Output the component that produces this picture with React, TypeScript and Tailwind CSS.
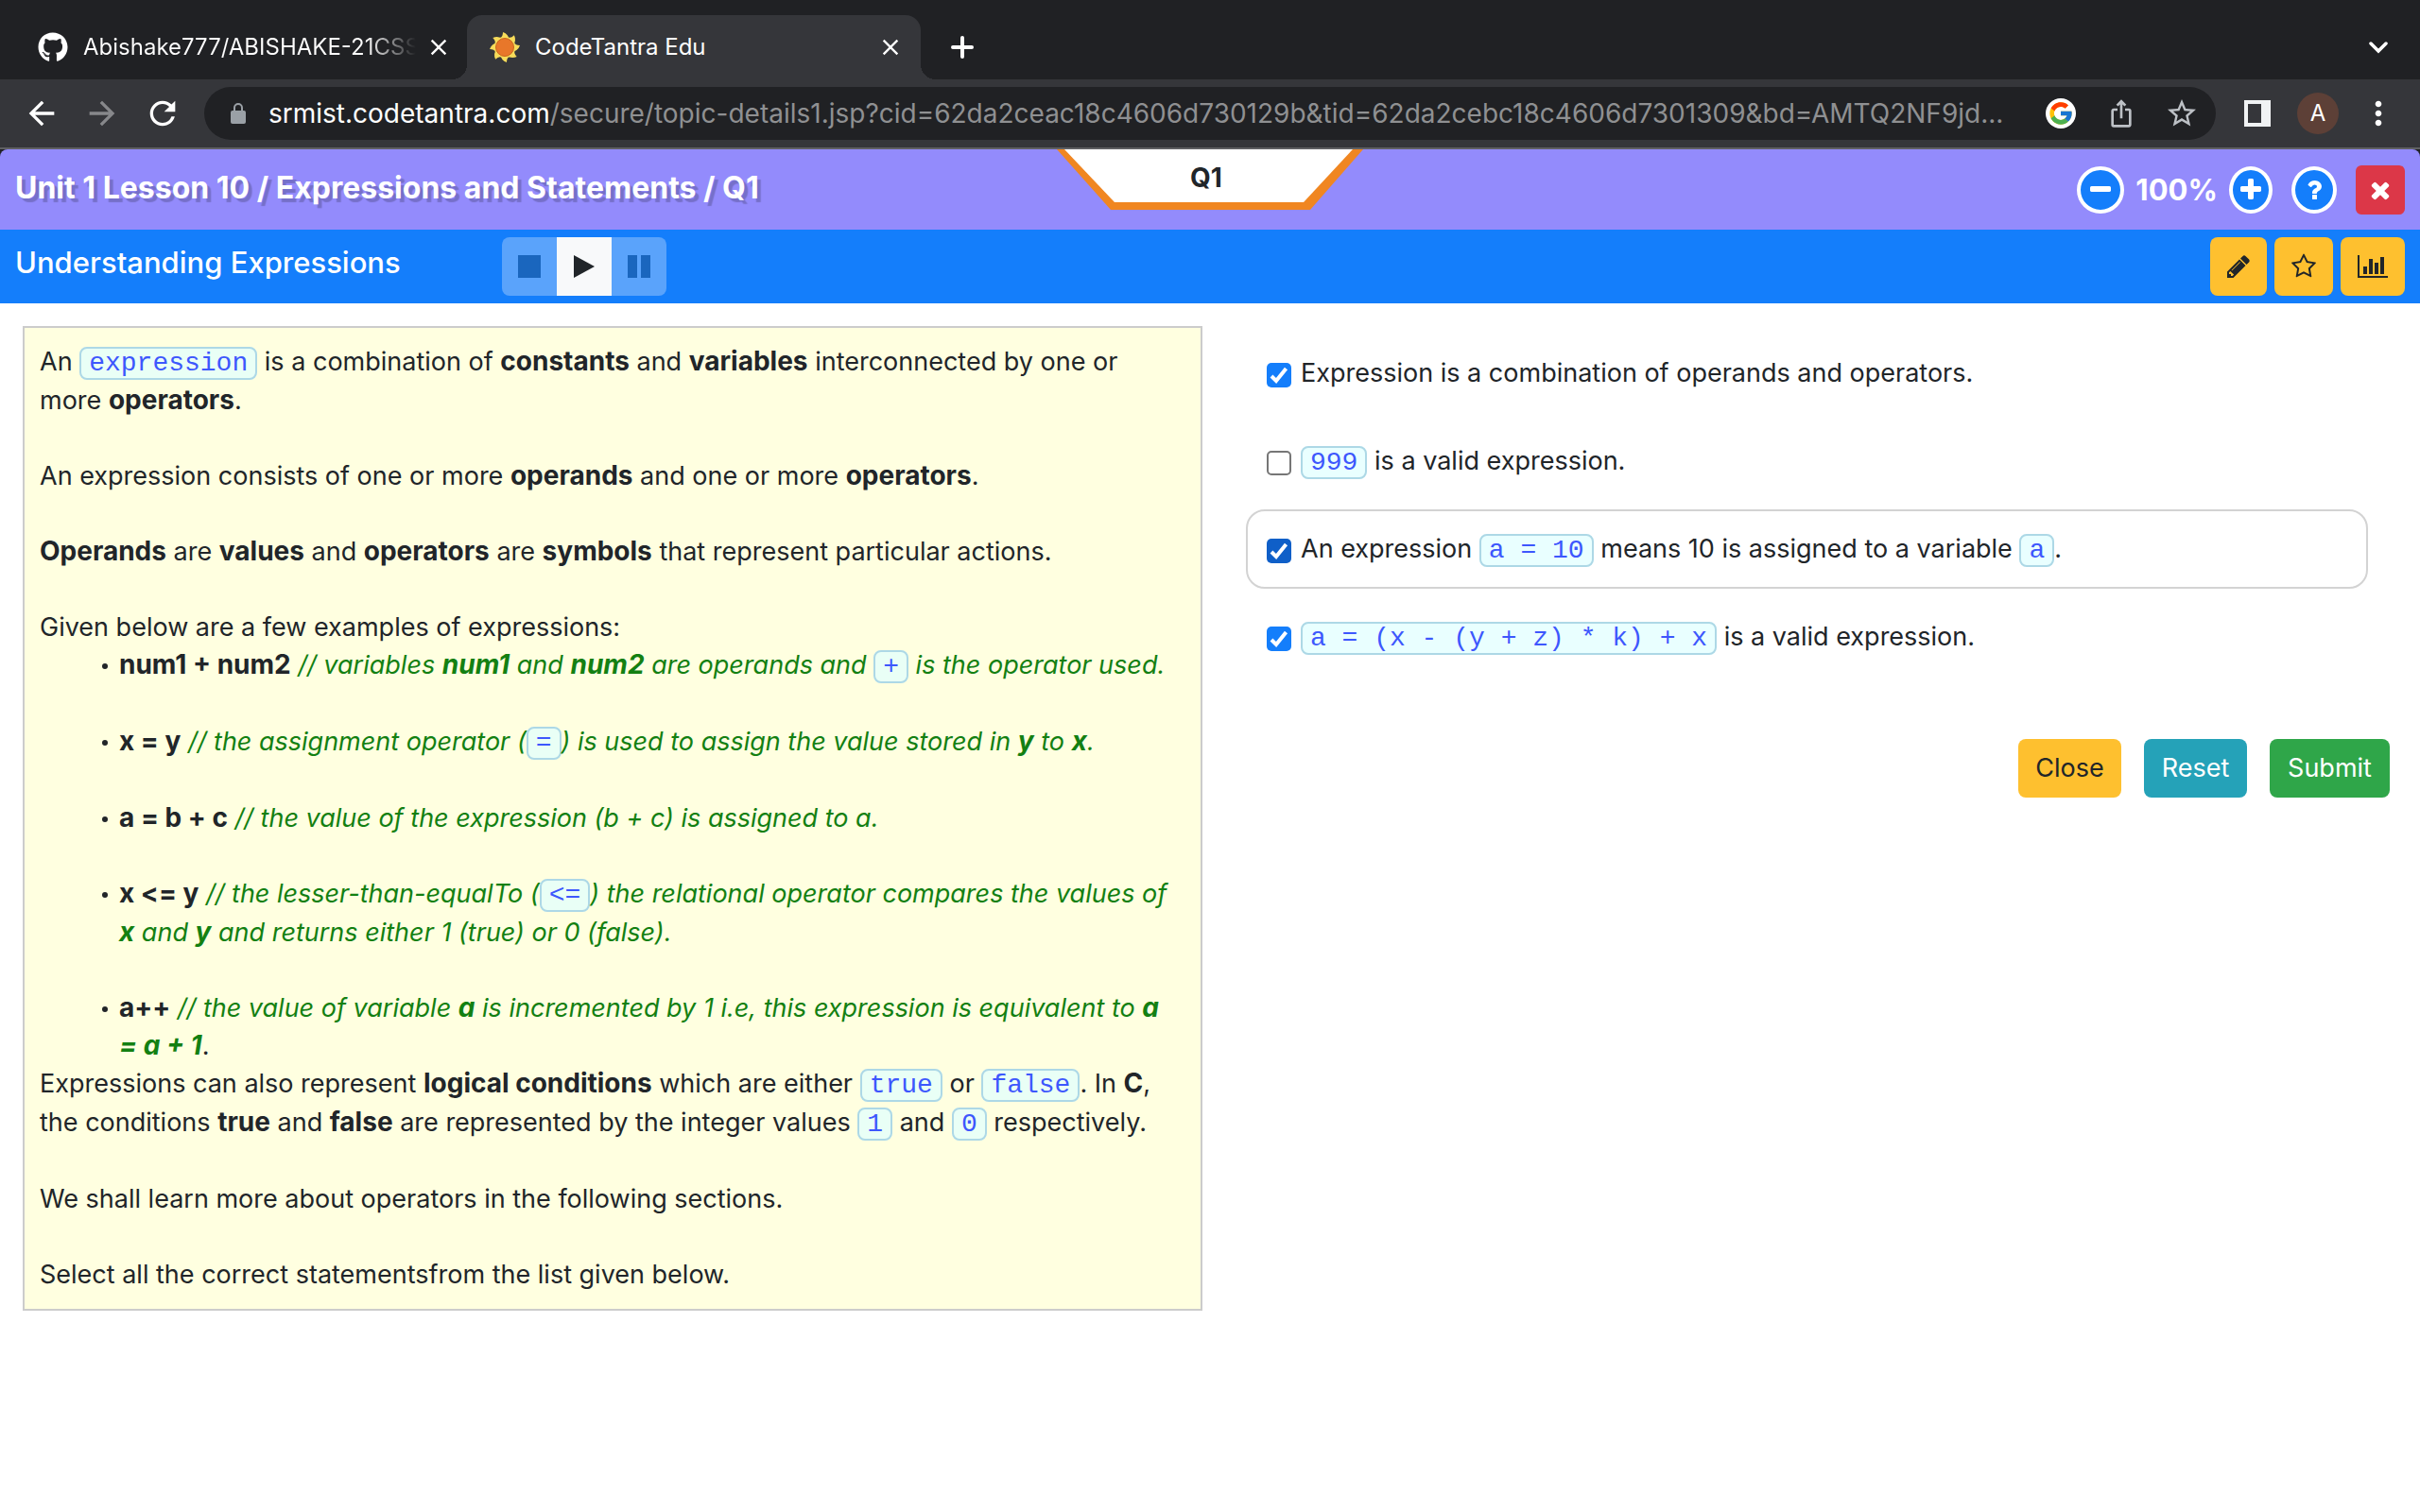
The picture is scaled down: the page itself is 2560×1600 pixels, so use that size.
import React, { useState } from "react";
import { FaGithub } from "react-icons/fa";
import { FcGoogle } from "react-icons/fc";
import { MdArrowBack, MdArrowForward, MdRefresh, MdClose, MdStarBorder, MdIosShare, MdMoreVert } from "react-icons/md";

const PATHS = {
  pencil:
    "M491 1536l91-91-235-235-91 91v107h128v128h107zm523-928q0-22-22-22-10 0-17 7l-542 542q-7 7-7 17 0 22 22 22 10 0 17-7l542-542q7-7 7-17zm-54-192l416 416-832 832h-416v-416zm683 96q0 53-37 90l-166 166-416-416 166-165q36-38 90-38 53 0 91 38l235 234q37 39 37 91z",
  star:
    "M1201 1004l306-297-422-62-189-382-189 382-422 62 306 297-73 421 378-199 377 199zm527-357q0 22-26 48l-363 354 86 500q1 7 1 20 0 50-41 50-19 0-40-12l-449-236-449 236q-22 12-40 12-21 0-31.5-14.5t-10.5-35.5q0-6 2-20l86-500-364-354q-25-27-25-48 0-37 56-46l502-73 225-455q19-41 49-41t49 41l225 455 502 73q56 9 56 46z",
  chart:
    "M640 896v512h-256v-512h256zm384-512v1024h-256v-1024h256zm1024 1152v128h-2048v-1536h128v1408h1920zm-640-896v768h-256v-768h256zm384-384v1152h-256v-1152h256z",
  times:
    "M1490 1322q0 40-28 68l-136 136q-28 28-68 28t-68-28l-294-294-294 294q-28 28-68 28t-68-28l-136-136q-28-28-28-68t28-68l294-294-294-294q-28-28-28-68t28-68l136-136q28-28 68-28t68 28l294 294 294-294q28-28 68-28t68 28l136 136q28 28 28 68t-28 68l-294 294 294 294q28 28 28 68z",
  minus:
    "M1600 736v192q0 40-28 68t-68 28h-1216q-40 0-68-28t-28-68v-192q0-40 28-68t68-28h1216q40 0 68 28t28 68z",
  plus:
    "M1600 736v192q0 40-28 68t-68 28h-416v416q0 40-28 68t-68 28h-192q-40 0-68-28t-28-68v-416h-416q-40 0-68-28t-28-68v-192q0-40 28-68t68-28h416v-416q0-40 28-68t68-28h192q40 0 68 28t28 68v416h416q40 0 68 28t28 68z",
  question:
    "M1088 1256v240q0 16-12 28t-28 12h-240q-16 0-28-12t-12-28v-240q0-16 12-28t28-12h240q16 0 28 12t12 28zm316-600q0 54-15.5 101t-35 76.5-55 59.5-57.5 43.5-61 35.5q-41 23-68.5 65t-27.5 67q0 17-12 32.5t-28 15.5h-240q-15 0-25.5-18.5t-10.5-37.5v-45q0-83 65-156.5t143-108.5q59-27 84-56t25-76q0-42-46.5-74t-107.5-32q-65 0-108 29-35 25-107 115-13 16-31 16-12 0-25-8l-164-125q-13-10-15.5-25t5.5-28q160-266 464-266 80 0 161 31t146 83 106 127.5 41 158.5z",
};

function Glyph({ d, className, wide = false }: { d: string; className: string; wide?: boolean }) {
  return (
    <svg viewBox={wide ? "0 0 2048 1792" : "0 0 1792 1792"} className={className} fill="currentColor" aria-hidden="true">
      <path d={d} />
    </svg>
  );
}

function SunIcon() {
  const rays = [0, 45, 90, 135, 180, 225, 270, 315];
  return (
    <svg viewBox="-16 -16 32 32" className="size-8 shrink-0" aria-hidden="true">
      {rays.map((r) => (
        <path key={r} d="M-6 -6 L-5 -10 Q-2 -11 -2 -16 Q4 -14 5 -7 Z" fill="#f7dc5a" transform={`rotate(${r})`} />
      ))}
      <circle r="9.500" fill="#e8772a" stroke="#c9651c" />
    </svg>
  );
}

function BrowserChrome() {
  return (
    <header className="bg-[#202124] text-white">
      <div className="flex h-[84px] items-end">
        <div className="flex h-[68px] w-[480px] shrink-0 items-center pl-10">
          <FaGithub className="size-8 shrink-0" aria-hidden="true" />
          <span className="ml-4 w-[352px] overflow-hidden whitespace-nowrap bg-gradient-to-r from-white from-85% to-transparent bg-clip-text text-2xl text-transparent">
            Abishake777/ABISHAKE-21CSS201
          </span>
          <button aria-label="Close tab" className="ml-2.5 shrink-0">
            <MdClose className="size-7" />
          </button>
        </div>
        <div className="relative ml-3.5 flex h-[68px] w-[480px] shrink-0 items-center rounded-t-2xl bg-[#35363a] pl-6 pr-[18px]">
          <SunIcon />
          <span className="ml-4 flex-1 text-2xl">CodeTantra Edu</span>
          <button aria-label="Close tab">
            <MdClose className="size-7" />
          </button>
          <span className="absolute bottom-0 right-full size-4 bg-[radial-gradient(circle_at_0_0,transparent_16px,#35363a_16px)]" />
          <span className="absolute bottom-0 left-full size-4 bg-[radial-gradient(circle_at_100%_0,transparent_16px,#35363a_16px)]" />
        </div>
        <button aria-label="New tab" className="ml-8 flex h-[68px] items-center">
          <svg viewBox="0 0 24 24" className="size-6" stroke="currentColor" strokeWidth="4" strokeLinecap="round" aria-hidden="true">
            <path d="M12 2v20M2 12h20" />
          </svg>
        </button>
        <button aria-label="Search tabs" className="ml-auto mr-[34px] flex h-[68px] items-center">
          <svg viewBox="0 0 20 14" className="w-5" fill="none" stroke="currentColor" strokeWidth="3.500" strokeLinecap="round" aria-hidden="true">
            <path d="M2 3l8 8 8-8" />
          </svg>
        </button>
      </div>
      <div className="flex h-[74px] items-center border-b-2 border-[#5f6063] bg-[#35363a]">
        <button aria-label="Back" className="ml-6">
          <MdArrowBack className="size-10" />
        </button>
        <button aria-label="Forward" className="ml-6 text-[#87888b]">
          <MdArrowForward className="size-10" />
        </button>
        <button aria-label="Reload" className="ml-6">
          <MdRefresh className="size-10" />
        </button>
        <div className="ml-6 flex h-14 min-w-0 flex-1 items-center rounded-full bg-[#202124] pl-7 pr-[18px] text-[#bdc1c6]">
          <svg viewBox="0 0 16 22" className="w-4 shrink-0" aria-hidden="true">
            <rect y="8" width="16" height="14" rx="2" fill="#9aa0a6" />
            <path d="M4 9V5a4 4 0 0 1 8 0v4" fill="none" stroke="#9aa0a6" strokeWidth="2" />
          </svg>
          <p className="ml-6 flex-1 truncate text-[28px] leading-10 text-[#8f9092]">
            <span className="text-white">srmist.codetantra.com</span>
            /secure/topic-details1.jsp?cid=62da2ceac18c4606d730129b&amp;tid=62da2cebc18c4606d7301309&amp;bd=AMTQ2NF9jd...
          </p>
          <span className="ml-4 flex size-8 shrink-0 items-center justify-center rounded-full bg-white">
            <FcGoogle className="size-7" aria-hidden="true" />
          </span>
          <button aria-label="Share" className="ml-8">
            <MdIosShare className="size-8" />
          </button>
          <button aria-label="Bookmark" className="ml-[30px]">
            <MdStarBorder className="size-9" />
          </button>
        </div>
        <button aria-label="Side panel" className="ml-[30px]">
          <svg viewBox="0 0 28 28" className="size-7" aria-hidden="true">
            <path fillRule="evenodd" fill="#f1f3f4" d="M0 0h28v28H0zM4 4v20h14V4z" />
          </svg>
        </button>
        <button aria-label="Profile" className="ml-7 flex size-11 items-center justify-center rounded-full bg-[#5d4037] text-2xl">
          A
        </button>
        <button aria-label="Menu" className="ml-[22px] mr-6">
          <MdMoreVert className="size-10" />
        </button>
      </div>
    </header>
  );
}

const ROUND = "flex h-[50px] items-center justify-center rounded-[50%] border-4 border-white bg-[#147efb] text-white";
const YELLOW = "flex h-[62px] items-center justify-center rounded-lg bg-[#fec02f] text-[#212529]";

function LessonBar() {
  return (
    <div className="bg-[#202124]">
      <div className="relative flex h-[85px] items-center rounded-t-lg bg-[#938bfc] px-4 text-white">
        <h1 className="pb-1 text-[32px] leading-10 font-bold [text-shadow:4px_4px_1px_rgba(0,0,0,0.2)]">
          Unit 1 Lesson 10 / Expressions and Statements / Q1
        </h1>
        <div className="absolute left-1/2 top-0 flex h-16 w-[324px] -translate-x-1/2 justify-center">
          <svg viewBox="0 0 324 64" className="absolute inset-0 size-full" aria-hidden="true">
            <path d="M0 0H324L268 64H57Z" fill="#f08621" />
            <path d="M8 0H313L261 56H61Z" fill="#fff" />
          </svg>
          <span className="relative mt-2.5 pr-2 text-[28px] leading-10 font-bold text-[#212529]">Q1</span>
        </div>
        <div className="ml-auto flex items-center">
          <button aria-label="Zoom out" className={ROUND + " w-[50px]"}>
            <Glyph d={PATHS.minus} className="size-7" />
          </button>
          <span className="mx-3 text-[31px] leading-10 font-bold">100%</span>
          <button aria-label="Zoom in" className={ROUND + " w-[46px]"}>
            <Glyph d={PATHS.plus} className="size-7" />
          </button>
          <button aria-label="Help" className={ROUND + " ml-5 w-12"}>
            <Glyph d={PATHS.question} className="size-7" />
          </button>
          <button aria-label="Exit" className="ml-5 flex size-[52px] items-center justify-center rounded-md bg-[#dc3748]">
            <Glyph d={PATHS.times} className="size-7" />
          </button>
        </div>
      </div>
    </div>
  );
}

function TopicBar() {
  return (
    <div className="flex h-[78px] items-center bg-[#147efb] px-4 text-white">
      <h2 className="w-[515px] pb-2 text-[31px] leading-10 font-medium">Understanding Expressions</h2>
      <div className="flex h-[62px] overflow-hidden rounded-lg">
        <button aria-label="Stop" className="flex w-[58px] items-center justify-center bg-[#5aa3fb]">
          <span className="size-6 bg-[#1a66be]" />
        </button>
        <button aria-label="Play" className="flex w-[58px] items-center justify-center bg-[#f8f9fa]">
          <svg viewBox="0 0 22 24" className="h-6" aria-hidden="true">
            <path d="M0 0L22 12L0 24Z" fill="#212529" />
          </svg>
        </button>
        <button aria-label="Pause" className="flex w-[58px] items-center justify-center gap-1 bg-[#5aa3fb]">
          <span className="h-6 w-2.5 bg-[#1a66be]" />
          <span className="h-6 w-2.5 bg-[#1a66be]" />
        </button>
      </div>
      <div className="ml-auto flex gap-2">
        <button aria-label="Edit" className={YELLOW + " w-[60px]"}>
          <Glyph d={PATHS.pencil} className="size-7" />
        </button>
        <button aria-label="Favourite" className={YELLOW + " w-[62px]"}>
          <Glyph d={PATHS.star} className="size-7" />
        </button>
        <button aria-label="Statistics" className={YELLOW + " w-[68px]"}>
          <Glyph d={PATHS.chart} className="h-7 w-8" wide />
        </button>
      </div>
    </div>
  );
}

function Code({ children }: { children: React.ReactNode }) {
  return (
    <code className="rounded-lg border-2 border-[#add8e6] bg-[#e0ffff]/70 px-2 font-['Liberation_Mono',monospace] text-[28px] leading-[38px] text-[#3d57fd]">
      {children}
    </code>
  );
}

function B({ children }: { children: React.ReactNode }) {
  return <b className="text-[28px] leading-9">{children}</b>;
}

function Example({ code, children, last = false }: { code: string; children: React.ReactNode; last?: boolean }) {
  return (
    <li className={last ? "relative" : "relative mb-10"}>
      <span className="absolute -left-[18px] top-[18px] size-[6px] rounded-full bg-[#212529]" />
      <B>{code}</B> {children}
    </li>
  );
}

function Note({ children }: { children: React.ReactNode }) {
  return <i className="text-[#138012]">{children}</i>;
}

function Lesson() {
  return (
    <article className="w-1/2 max-w-[1248px] shrink-0 self-start border-2 border-[#ccc] bg-[#ffffe0] p-4 pr-6">
      <p className="mb-10">
        An <Code>expression</Code> is a combination of <B>constants</B> and <B>variables</B> interconnected by one or more{" "}
        <B>operators</B>.
      </p>
      <p className="mb-10">
        An expression consists of one or more <B>operands</B> and one or more <B>operators</B>.
      </p>
      <p className="mb-10">
        <B>Operands</B> are <B>values</B> and <B>operators</B> are <B>symbols</B> that represent particular actions.
      </p>
      <p>Given below are a few examples of expressions:</p>
      <ul className="pl-[84px]">
        <Example code="num1 + num2">
          <Note>
            // variables <B>num1</B> and <B>num2</B> are operands and <Code>+</Code> is the operator used.
          </Note>
        </Example>
        <Example code="x = y">
          <Note>
            // the assignment operator (<Code>=</Code>) is used to assign the value stored in <B>y</B> to <B>x</B>.
          </Note>
        </Example>
        <Example code="a = b + c">
          <Note>// the value of the expression (b + c) is assigned to a.</Note>
        </Example>
        <Example code="x <= y">
          <Note>
            // the lesser-than-equalTo (<Code>&lt;=</Code>) the relational operator compares the values of <B>x</B> and{" "}
            <B>y</B> and returns either 1 (true) or 0 (false).
          </Note>
        </Example>
        <Example code="a++" last>
          <Note>
            // the value of variable <B>a</B> is incremented by 1 i.e, this expression is equivalent to <B>a = a + 1</B>
          </Note>
          .
        </Example>
      </ul>
      <p className="mb-10">
        Expressions can also represent <B>logical conditions</B> which are either <Code>true</Code> or <Code>false</Code>. In{" "}
        <B>C</B>, the conditions <B>true</B> and <B>false</B> are represented by the integer values <Code>1</Code> and{" "}
        <Code>0</Code> respectively.
      </p>
      <p className="mb-10">We shall learn more about operators in the following sections.</p>
      <p>Select all the correct statementsfrom the list given below.</p>
    </article>
  );
}

function Option({ children, checked, hovered = false }: { children: React.ReactNode; checked: boolean; hovered?: boolean }) {
  const [on, setOn] = useState(checked);
  return (
    <label
      className={
        "flex min-h-[84px] items-center rounded-[20px] border-2 px-5 " + (hovered ? "border-[#d3d3d3]" : "border-transparent")
      }
    >
      <span className="relative mt-1 size-[26px] shrink-0">
        <input
          type="checkbox"
          checked={on}
          onChange={() => setOn(!on)}
          className={
            "block size-full appearance-none rounded-[5px] border-2 border-[#767676] bg-white checked:border-0 " +
            (hovered ? "checked:bg-[#0f5fc8]" : "checked:bg-[#147efb]")
          }
        />
        {on && (
          <svg viewBox="0 0 26 26" className="pointer-events-none absolute inset-0" fill="none" stroke="#fff" strokeWidth="4" aria-hidden="true">
            <path d="M5 14l5 5L20.500 6" />
          </svg>
        )}
      </span>
      <span className="ml-2.5">{children}</span>
    </label>
  );
}

function Answers() {
  return (
    <section className="flex flex-1 flex-col pl-[46px] pr-8 pt-2">
      <div className="mr-[23px] flex flex-col gap-[9px]">
        <Option checked>Expression is a combination of operands and operators.</Option>
        <Option checked={false}>
          <Code>999</Code> is a valid expression.
        </Option>
        <Option checked hovered>
          An expression <Code>a = 10</Code> means 10 is assigned to a variable <Code>a</Code>.
        </Option>
        <Option checked>
          <Code>a = (x - (y + z) * k) + x</Code> is a valid expression.
        </Option>
      </div>
      <div className="mt-[66px] flex justify-end gap-6">
        <button className="h-[62px] w-[109px] rounded-lg bg-[#fec02f]">Close</button>
        <button className="h-[62px] w-[109px] rounded-lg bg-[#25a2b8] text-white">Reset</button>
        <button className="h-[62px] w-[127px] rounded-lg bg-[#2fa649] text-white">Submit</button>
      </div>
    </section>
  );
}

export default function App() {
  return (
    <div className="min-h-screen bg-white font-['Inter',sans-serif] text-[27px] leading-10 text-[#212529]">
      <BrowserChrome />
      <LessonBar />
      <TopicBar />
      <main className="flex pl-6 pt-6">
        <Lesson />
        <Answers />
      </main>
    </div>
  );
}
